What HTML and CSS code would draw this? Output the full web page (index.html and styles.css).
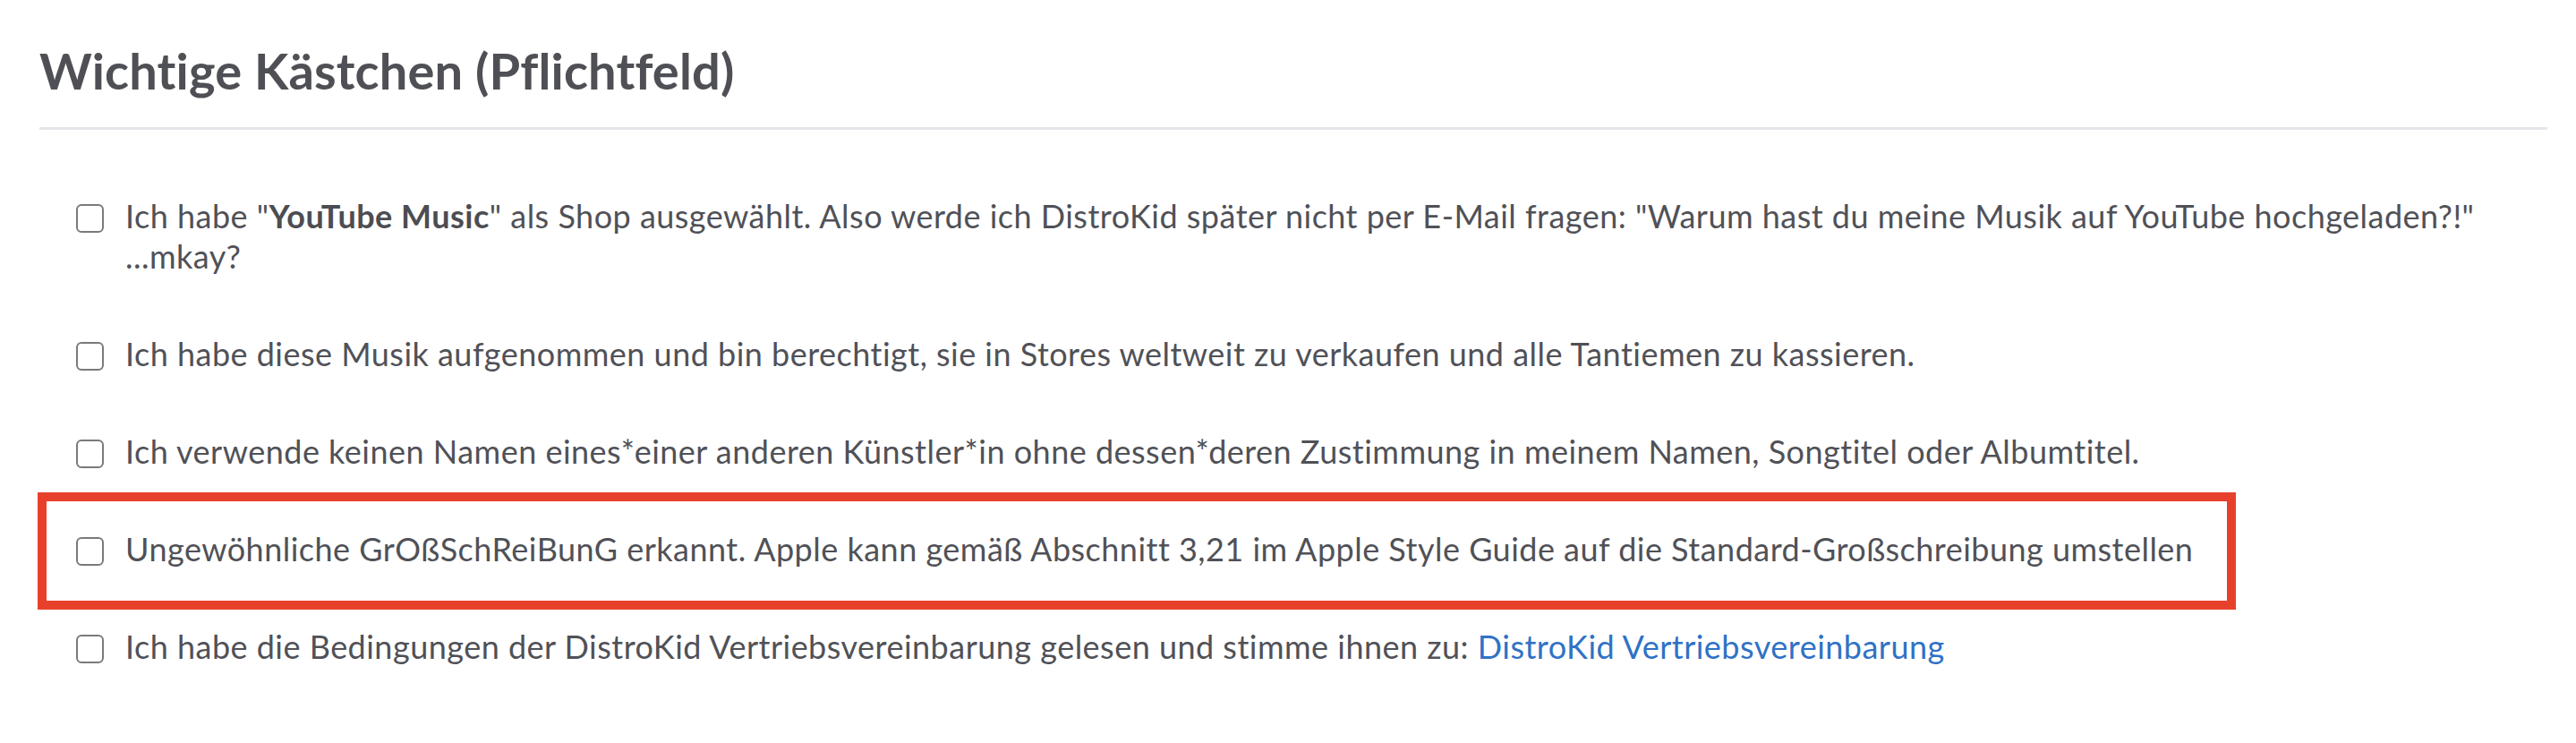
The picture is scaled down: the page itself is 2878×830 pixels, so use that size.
FILE: index.html
```html
<!DOCTYPE html>
<html lang="de">
<head>
<meta charset="utf-8">
<title>Wichtige Kästchen</title>
<link rel="stylesheet" href="styles.css">
</head>
<body>
<section class="panel">
  <h2 class="panel-title">Wichtige Kästchen (Pflichtfeld)</h2>
  <div class="checks">
    <label class="check">
      <input type="checkbox" class="box">
      <span class="check-text">Ich habe "<b>YouTube Music</b>" als Shop ausgewählt. Also werde ich DistroKid später nicht per E-Mail fragen: "Warum hast du meine Musik auf YouTube hochgeladen?!" ...mkay?</span>
    </label>
    <label class="check">
      <input type="checkbox" class="box">
      <span class="check-text">Ich habe diese Musik aufgenommen und bin berechtigt, sie in Stores weltweit zu verkaufen und alle Tantiemen zu kassieren.</span>
    </label>
    <label class="check">
      <input type="checkbox" class="box">
      <span class="check-text">Ich verwende keinen Namen eines*einer anderen Künstler*in ohne dessen*deren Zustimmung in meinem Namen, Songtitel oder Albumtitel.</span>
    </label>
    <label class="check check-marked">
      <input type="checkbox" class="box">
      <span class="check-text">Ungewöhnliche GrOßSchReiBunG erkannt. Apple kann gemäß Abschnitt 3,21 im Apple Style Guide auf die Standard-Großschreibung umstellen</span>
    </label>
    <label class="check">
      <input type="checkbox" class="box">
      <span class="check-text">Ich habe die Bedingungen der DistroKid Vertriebsvereinbarung gelesen und stimme ihnen zu: <a class="link" href="#">DistroKid Vertriebsvereinbarung</a></span>
    </label>
  </div>
</section>
</body>
</html>
```

FILE: styles.css
```css
html, body {
  margin: 0;
  padding: 0;
  background: #ffffff;
}

body {
  font-family: Lato, "Open Sans", "Liberation Sans", sans-serif;
  color: #505157;
  font-variant-ligatures: no-common-ligatures;
}

.panel {
  padding: 45px 32px 0 44px;
}

.panel-title {
  margin: 0;
  font-size: 56px;
  font-weight: 700;
  line-height: 1.2;
  letter-spacing: 0.15px;
  color: #4f5055;
  padding-bottom: 30px;
  border-bottom: 3px solid #e6e6ea;
}

.checks {
  display: flex;
  flex-direction: column;
  align-items: flex-start;
  gap: 64px;
  padding: 74px 0 0 41px;
}

.check {
  position: relative;
  display: flex;
  align-items: flex-start;
  gap: 24px;
  font-size: 36px;
  line-height: 45px;
  letter-spacing: 0.48px;
}

.box {
  appearance: none;
  -webkit-appearance: none;
  flex: none;
  width: 31px;
  height: 32px;
  margin: 9px 0 0 0;
  border: 2px solid #7a7a7a;
  border-radius: 6px;
  background: #fff;
  box-sizing: border-box;
}

.check-text b {
  font-weight: 700;
  color: #4c4d52;
}

.link {
  color: #2f72c6;
  text-decoration: none;
}

.check-marked::after {
  content: "";
  position: absolute;
  top: -41px;
  bottom: -45px;
  left: -43px;
  right: -48px;
  border: 10px solid #e8412b;
  pointer-events: none;
}
```
